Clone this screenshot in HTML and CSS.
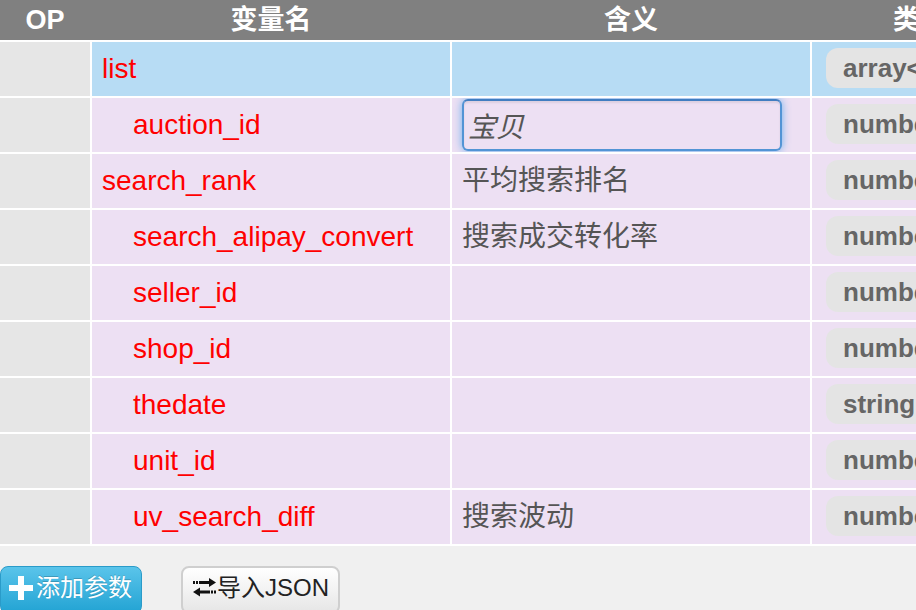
FILE: index.html
```html
<!DOCTYPE html>
<html lang="zh-CN">
<head>
<meta charset="utf-8">
<title>参数</title>
<link rel="stylesheet" href="styles.css">
</head>
<body>
<div class="page">
  <div class="grid">
    <div class="row head">
      <div class="th">OP</div>
      <div class="th">变量名</div>
      <div class="th">含义</div>
      <div class="th">类型</div>
    </div>
    <div class="row selected">
      <div class="op"></div>
      <div class="name">list</div>
      <div class="mean"></div>
      <div class="type"><span class="badge">array&lt;object&gt;</span></div>
    </div>
    <div class="row">
      <div class="op"></div>
      <div class="name child">auction_id</div>
      <div class="mean"><input class="edit" type="text" value="宝贝"></div>
      <div class="type"><span class="badge">number</span></div>
    </div>
    <div class="row">
      <div class="op"></div>
      <div class="name">search_rank</div>
      <div class="mean">平均搜索排名</div>
      <div class="type"><span class="badge">number</span></div>
    </div>
    <div class="row">
      <div class="op"></div>
      <div class="name child">search_alipay_convert</div>
      <div class="mean">搜索成交转化率</div>
      <div class="type"><span class="badge">number</span></div>
    </div>
    <div class="row">
      <div class="op"></div>
      <div class="name child">seller_id</div>
      <div class="mean"></div>
      <div class="type"><span class="badge">number</span></div>
    </div>
    <div class="row">
      <div class="op"></div>
      <div class="name child">shop_id</div>
      <div class="mean"></div>
      <div class="type"><span class="badge">number</span></div>
    </div>
    <div class="row">
      <div class="op"></div>
      <div class="name child">thedate</div>
      <div class="mean"></div>
      <div class="type"><span class="badge">string</span></div>
    </div>
    <div class="row">
      <div class="op"></div>
      <div class="name child">unit_id</div>
      <div class="mean"></div>
      <div class="type"><span class="badge">number</span></div>
    </div>
    <div class="row">
      <div class="op"></div>
      <div class="name child">uv_search_diff</div>
      <div class="mean">搜索波动</div>
      <div class="type"><span class="badge">number</span></div>
    </div>
  </div>
  <div class="actions">
    <button class="btn btn-info" type="button"><svg class="ico" width="24" height="24" viewBox="0 0 24 24"><path d="M9 0h6v9h9v6h-9v9H9v-9H0V9h9z" fill="#fff"/></svg><span class="lbl">添加参数</span></button>
    <button class="btn btn-default" type="button"><svg class="ico" width="24" height="20" viewBox="0 0 24 20"><g fill="#111"><rect x="0" y="3" width="2" height="3"/><rect x="3" y="3" width="2" height="3"/><rect x="6" y="3" width="11" height="3"/><polygon points="16,0 23,4.5 16,9"/><polygon points="7,9.5 0,14 7,18.5"/><rect x="6" y="12.5" width="11" height="3"/><rect x="18" y="12.5" width="2" height="3"/><rect x="21" y="12.5" width="2" height="3"/></g></svg><span class="lbl">导入JSON</span></button>
  </div>
</div>
</body>
</html>
```

FILE: styles.css
```css
html, body {
  margin: 0;
  padding: 0;
  background: #f0f0f0;
  overflow: hidden;
}
body {
  font-family: "Liberation Sans", Arial, "Noto Sans CJK SC", sans-serif;
  width: 916px;
  height: 610px;
}
.page {
  width: 1028px;
}
.grid {
  display: flex;
  flex-direction: column;
}
.row {
  display: grid;
  grid-template-columns: 90px 358px 358px 216px;
  column-gap: 2px;
  background: #fff;
  border-bottom: 2px solid #fff;
  height: 54px;
}
.row.head {
  background: #808080;
  height: 40px;
}
.th {
  color: #fff;
  font-weight: bold;
  font-size: 27px;
  line-height: 40px;
  text-align: center;
  white-space: nowrap;
}
.op {
  background: #e6e6e6;
}
.name, .mean, .type {
  background: #ede0f3;
  font-size: 28px;
  line-height: 54px;
  white-space: nowrap;
  overflow: hidden;
}
.selected .name, .selected .mean, .selected .type {
  background: #b7dcf4;
}
.name {
  color: #ff0000;
  padding-left: 10px;
}
.name.child {
  padding-left: 41px;
}
.mean {
  color: #555;
  padding-left: 10px;
}
.edit {
  box-sizing: border-box;
  width: 320px;
  height: 52px;
  margin: 1px 0 0 0;
  vertical-align: top;
  padding: 0 4px;
  font-family: "Liberation Sans", Arial, "Noto Sans CJK SC", sans-serif;
  font-size: 28px;
  font-style: italic;
  color: #555;
  background: transparent;
  border: 2px solid rgba(66, 140, 210, 0.9);
  border-top-color: rgba(55, 120, 190, 0.95);
  border-radius: 6px;
  outline: none;
  box-shadow: inset 0 2px 2px rgba(0, 0, 0, 0.08), 0 0 8px rgba(82, 168, 236, 0.85);
}
.type {
  padding-left: 14px;
  display: flex;
  align-items: flex-start;
}
.badge {
  margin-top: 6px;
  height: 40px;
  line-height: 40px;
  padding: 0 17px;
  border-radius: 12px;
  background: #e4e4e4;
  color: #666;
  font-weight: bold;
  font-size: 26px;
}
.actions {
  display: flex;
  gap: 39px;
  margin-top: 20px;
}
.btn {
  display: inline-flex;
  align-items: center;
  gap: 3px;
  box-sizing: border-box;
  height: 48px;
  padding: 0 6px 4px 8px;
  font-family: "Liberation Sans", Arial, "Noto Sans CJK SC", sans-serif;
  font-size: 24px;
  line-height: 28px;
  border-radius: 8px;
  white-space: nowrap;
  cursor: pointer;
}
.lbl {
  white-space: nowrap;
}
.btn-info {
  width: 142px;
  color: #fff;
  background: linear-gradient(#5ac4ea, #22a3d3);
  border: 1px solid #2a9bc9;
  text-shadow: 0 -1px 0 rgba(0, 0, 0, 0.2);
}
.btn-default {
  width: 159px;
  padding-left: 10px;
  gap: 0;
  color: #222;
  background: linear-gradient(#ffffff, #e6e6e6);
  border: 2px solid #cfcfcf;
}
.ico {
  flex: none;
}
```
